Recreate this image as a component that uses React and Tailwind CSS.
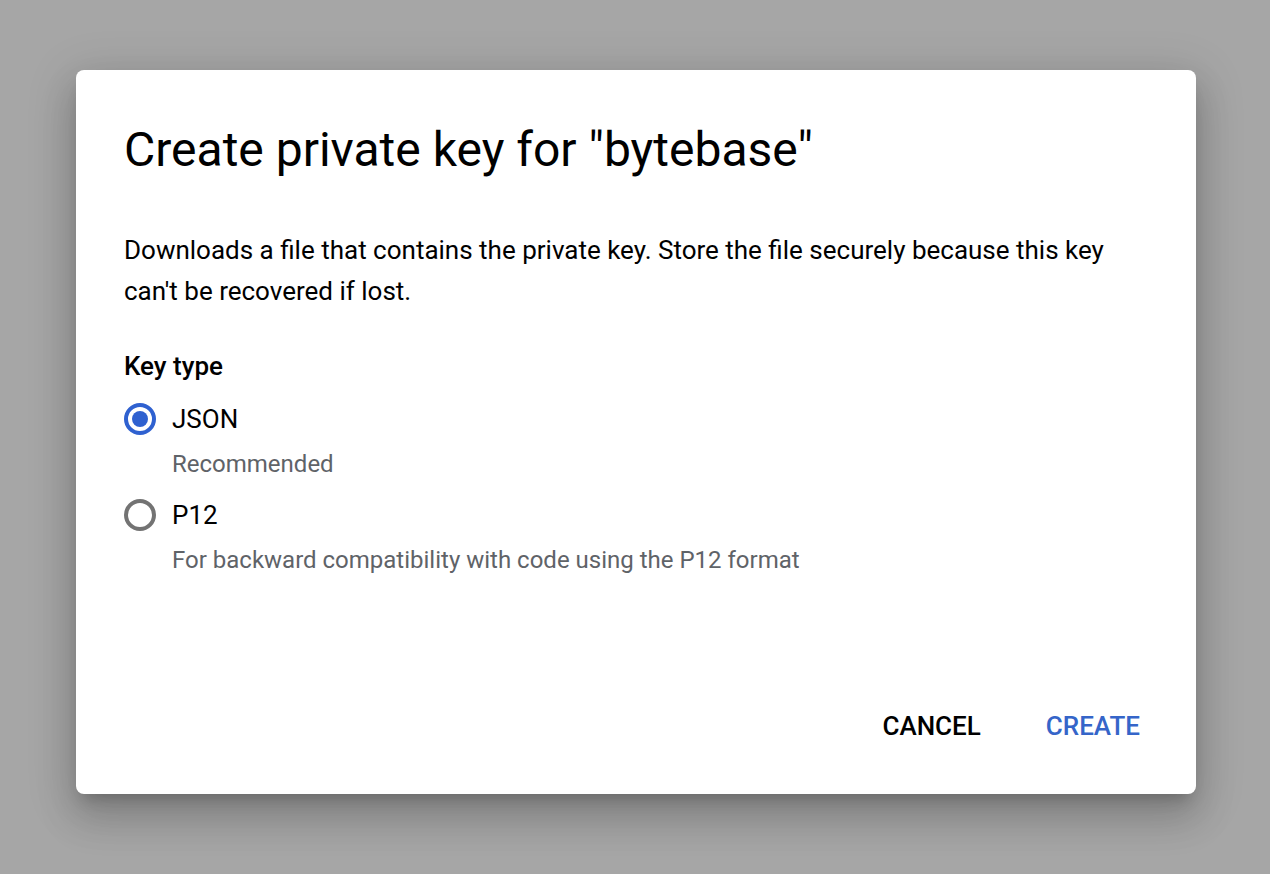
import { useState } from "react";

const options = [
  { id: "json", label: "JSON", hint: "Recommended" },
  { id: "p12", label: "P12", hint: "For backward compatibility with code using the P12 format" },
];

function Radio({ checked }) {
  return (
    <span
      className={
        "flex h-8 w-8 shrink-0 items-center justify-center rounded-full border-4 " +
        (checked ? "border-[#2f61d0]" : "border-[#737373]")
      }
    >
      {checked && <span className="h-4 w-4 rounded-full bg-[#2f61d0]" />}
    </span>
  );
}

export default function App() {
  const [keyType, setKeyType] = useState("json");

  return (
    <div
      className="h-screen w-full overflow-hidden bg-[#a6a6a6] pt-[70px] pl-[76px]"
      style={{ fontFamily: "Roboto, 'Noto Sans', sans-serif" }}
    >
      <div className="flex h-[724px] w-[1120px] flex-col rounded-lg bg-white pl-12 pr-[48px] pt-[52px] pb-[44px] shadow-[0_11px_15px_-7px_rgba(0,0,0,0.2),0_24px_38px_3px_rgba(0,0,0,0.14),0_9px_46px_8px_rgba(0,0,0,0.12)]">
        {/* Header */}
        <h1 className="text-[48px] leading-[56px] font-normal text-black">
          Create private key for "bytebase"
        </h1>

        <p className="mt-[52px] text-[26px] leading-[41px] text-black">
          Downloads a file that contains the private key. Store the file securely because this key
          can't be recovered if lost.
        </p>

        {/* Key type */}
        <div className="mt-[38px] text-[26px] leading-8 font-medium text-black">Key type</div>

        <div className="flex flex-col">
          {options.map((opt) => (
            <button
              key={opt.id}
              onClick={() => setKeyType(opt.id)}
              className="mt-[21px] flex flex-col text-left"
            >
              <span className="flex items-center gap-4">
                <Radio checked={keyType === opt.id} />
                <span className="text-[26px] leading-8 text-black">{opt.label}</span>
              </span>
              <span className="mt-[15px] pl-12 text-[24px] leading-7 text-[#5f6368]">
                {opt.hint}
              </span>
            </button>
          ))}
        </div>

        {/* Actions */}
        <div className="mt-auto flex justify-end gap-[49px]">
          <button className="h-12 px-2 text-[26px] font-medium uppercase text-black">Cancel</button>
          <button className="h-12 px-2 text-[26px] font-medium uppercase text-[#3565c9]">Create</button>
        </div>
      </div>
    </div>
  );
}
